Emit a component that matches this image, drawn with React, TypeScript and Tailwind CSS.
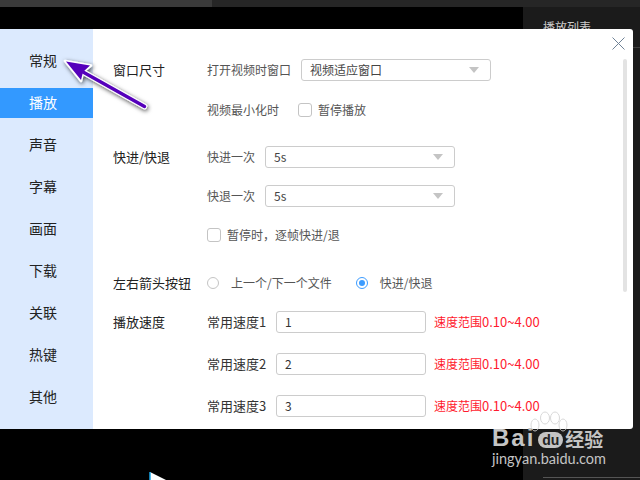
const navItems = ['常规', '播放', '声音', '字幕', '画面', '下载', '关联', '热键', '其他'];

function Caret() {
	return <span className="ml-auto h-0 w-0 border-x-[5.5px] border-t-[6px] border-x-transparent border-t-[#c4c4c4]" />;
}

function Select({ value, width }: { value: string; width: string }) {
	return (
		<div className={`flex h-[22px] items-center rounded-[3px] border border-[#cccccc] pl-[8px] pr-[11px] text-xs text-[#444444] ${width}`}>
			{value}
			<Caret />
		</div>
	);
}

function Check({ label }: { label: string }) {
	return (
		<div className="flex items-center gap-[6px] text-xs text-[#555555]">
			<span className="h-[14px] w-[14px] rounded-[3px] border border-[#c4c4c4] bg-white" />
			{label}
		</div>
	);
}

function Row({ title, label, gap = 'mr-[10px]', mt, children }: { title?: string; label?: string; gap?: string; mt: string; children?: React.ReactNode }) {
	return (
		<div className={`flex h-[22px] items-center ${mt}`}>
			<div className="w-[94px] shrink-0 text-[13px] text-[#222222]">{title}</div>
			{label && <div className={`shrink-0 text-xs text-[#555555] ${gap}`}>{label}</div>}
			{children}
		</div>
	);
}

function SpeedRow({ title, n, mt }: { title?: string; n: number; mt: string }) {
	return (
		<Row title={title} mt={mt}>
			<div className="w-[59px] shrink-0 whitespace-nowrap text-[13px] text-[#333333]">常用速度{n}</div>
			<div className="ml-[10px] flex h-[22px] w-[150px] items-center rounded-[3px] border border-[#cccccc] pl-[8px] text-xs text-[#333333]">{n}</div>
			<div className="ml-[8px] whitespace-nowrap text-xs text-[#ff1a2e]">
				速度范围<span className="text-[13px] leading-none">0.10~4.00</span>
			</div>
		</Row>
	);
}

export default function App() {
	return (
		<div className="relative flex h-[480px] w-[640px] flex-col overflow-hidden bg-black font-['Noto_Sans_CJK_SC',sans-serif]">
			<div className="flex h-[7px] shrink-0">
				<div className="w-[212px] bg-[#3a3a3a]" />
				<div className="flex-1 bg-[#262626]" />
			</div>
			<div className="flex flex-1 justify-end">
				<div className="w-[117px] bg-[#1b1b1b] pl-[20px] pt-[12px]">
					<div className="border-b border-[#3c3c3c] pb-[12px] text-xs text-[#cccccc]">播放列表</div>
					<div className="mt-[429px] border-t border-[#555555]" />
				</div>
			</div>

			{/* play icon under the dialog */}
			<svg className="absolute left-[148px] top-[470px]" width="24" height="10" viewBox="0 0 24 10">
				<path d="M2 2 L2 12 L22 12 Z" fill="#ffffff" />
				<path d="M2 2 L2 10" stroke="#1aa7e8" strokeWidth="1.5" />
			</svg>

			{/* settings dialog */}
			<div className="absolute left-0 top-[29px] flex h-[400px] w-[633px] rounded-r-[3px] bg-white">
				<div className="flex w-[93px] shrink-0 flex-col gap-[12px] bg-[#dceafe] pt-[17px]">
					{navItems.map((item) => (
						<div
							key={item}
							className={`flex h-[30px] items-center pb-[2px] pl-[29px] text-sm ${item === '播放' ? 'bg-[#3399ff] text-white' : 'text-[#222222]'}`}
						>
							{item}
						</div>
					))}
				</div>

				<div className="flex-1 pl-[20px] pt-[30px]">
					<Row title="窗口尺寸" label="打开视频时窗口" mt="mt-0">
						<Select value="视频适应窗口" width="w-[190px]" />
					</Row>
					<Row label="视频最小化时" gap="mr-[19px]" mt="mt-[18px]">
						<Check label="暂停播放" />
					</Row>
					<Row title="快进/快退" label="快进一次" mt="mt-[25px]">
						<Select value="5s" width="w-[190px]" />
					</Row>
					<Row label="快退一次" mt="mt-[17px]">
						<Select value="5s" width="w-[190px]" />
					</Row>
					<Row mt="mt-[17px]">
						<Check label="暂停时，逐帧快进/退" />
					</Row>
					<Row title="左右箭头按钮" mt="mt-[26px]">
						<div className="flex items-center gap-[12px] text-xs text-[#555555]">
							<span className="h-[12px] w-[12px] rounded-full border border-[#c4c4c4]" />
							上一个/下一个文件
						</div>
						<div className="ml-[24px] flex items-center gap-[12px] text-xs text-[#555555]">
							<span className="flex h-[12px] w-[12px] items-center justify-center rounded-full border border-[#3c9cff]">
								<span className="h-[6px] w-[6px] rounded-full bg-[#3c9cff]" />
							</span>
							快进/快退
						</div>
					</Row>
					<SpeedRow title="播放速度" n={1} mt="mt-[17px]" />
					<SpeedRow n={2} mt="mt-[20px]" />
					<SpeedRow n={3} mt="mt-[20px]" />
				</div>

				<svg className="absolute left-[612px] top-[8px]" width="13" height="13" viewBox="0 0 13 13" fill="none" stroke="#6f8296" strokeWidth="1">
					<path d="M0.5 0.5 L12.5 12.5 M12.5 0.5 L0.5 12.5" />
				</svg>
				<div className="absolute left-[623px] top-[30px] h-[233px] w-[4px] rounded-full bg-[#e3e3e3]" />
			</div>

			{/* purple annotation arrow */}
			<svg className="absolute left-[55px] top-[52px]" width="100" height="64" viewBox="55 52 100 64">
				<defs>
					<filter id="arrowShadow" x="-20%" y="-20%" width="140%" height="140%">
						<feDropShadow dx="1" dy="1.500" stdDeviation="2" floodColor="#000000" floodOpacity="0.7" />
					</filter>
				</defs>
				<g filter="url(#arrowShadow)">
					<path d="M144.500 106.500 L83 72" stroke="#ffffff" strokeWidth="5.500" strokeLinecap="round" />
					<path d="M65 61 L91 65.500 L83 72 L81 81 Z" fill="#ffffff" stroke="#ffffff" strokeWidth="2.500" strokeLinejoin="round" />
				</g>
				<path d="M144.500 106.500 L83 72" stroke="#5500bb" strokeWidth="3.500" strokeLinecap="round" />
				<path d="M66 61.500 L90 65.500 L83 72 L81 80 Z" fill="#5500bb" />
			</svg>

			{/* watermark */}
			<div className="absolute left-[492px] top-[427px] w-[120px] font-['Liberation_Sans',sans-serif] text-[#c4c4c4]">
				<svg className="absolute left-[38px] top-[-16px]" width="40" height="26" viewBox="0 0 40 26" fill="none" stroke="#d4d4d4" strokeWidth="1" opacity="0.9">
					<ellipse cx="5" cy="14" rx="4" ry="6" />
					<ellipse cx="15" cy="7" rx="4.500" ry="6" />
					<ellipse cx="25" cy="7" rx="4.500" ry="6" />
					<ellipse cx="33" cy="14" rx="4" ry="6" />
				</svg>
				<div className="relative flex h-[22px] items-center">
					<span className="text-[24px] font-bold leading-none tracking-[2px]">Bai</span>
					<span className="ml-[3px] flex h-[16px] w-[25px] translate-y-[2px] items-center justify-center rounded-full bg-[#c4c4c4] text-[14px] font-bold leading-none text-[#222222]">du</span>
					<span className="ml-[2px] font-['Noto_Sans_CJK_SC'] text-[19px] font-bold leading-none">经验</span>
				</div>
				<div className="mt-[1px] font-['Lato'] text-[14.500px] leading-[18px]">jingyan.baidu.com</div>
			</div>
		</div>
	);
}
